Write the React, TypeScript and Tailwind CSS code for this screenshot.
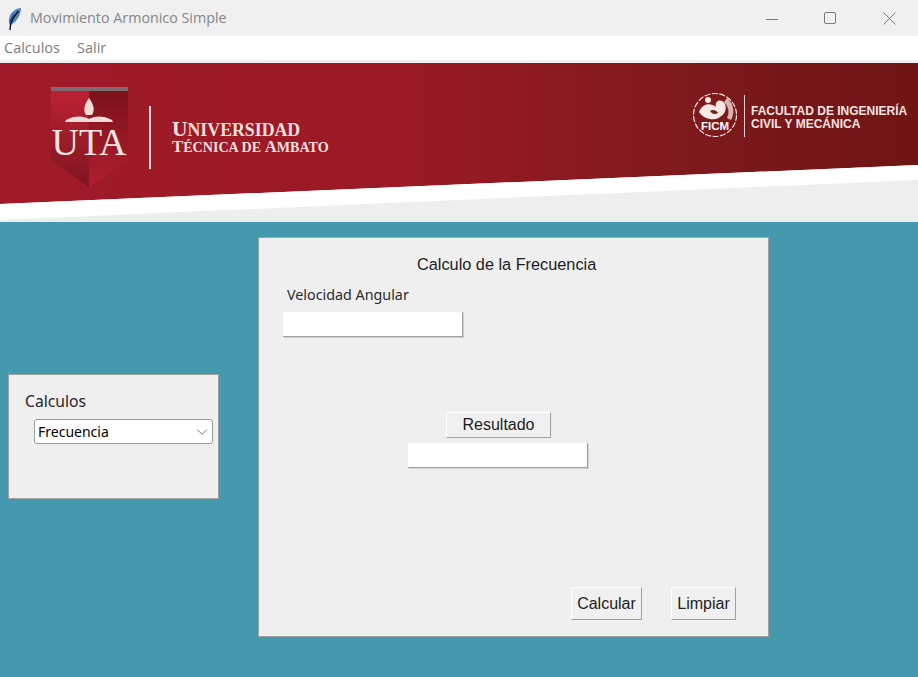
import { ChevronDown } from 'lucide-react';

const raised = "bg-[#f0f0f0] border border-t-white border-l-white border-r-[#a0a0a0] border-b-[#a0a0a0] text-[#1c1c24] font-['Liberation_Sans',sans-serif] text-[16px] leading-none";
const entry = "block h-[25px] w-[180px] bg-white border-r border-b border-r-[#a0a0a0] border-b-[#a0a0a0] shadow-[1px_1px_0_#d0d0d0]";

function TitleBar() {
  return (
    <div className="flex h-9 items-center bg-[#f0f0f0]">
      <svg width="16" height="24" viewBox="0 0 16 24" className="ml-[6px]">
        <path d="M15 2 C10 2 5 6 3.500 11 C2.500 14 2.500 17 4 19 C8 18 12 13 13.500 9 C14.500 6.500 15 4 15 2Z" fill="#4f83c4" />
        <path d="M9 7 C6 10 4 13 3.500 17 C6 15 8 12 9 7Z" fill="#274a80" />
        <path d="M12.500 5 C9 9 6 13 4.500 19 L4 24" stroke="#10141f" strokeWidth="1.400" fill="none" />
      </svg>
      <span className="ml-2 font-['Open_Sans',sans-serif] text-[14.300px] text-[#85868a]">Movimiento Armonico Simple</span>
      <svg width="130" height="14" viewBox="0 0 130 14" className="ml-auto mr-[22px]" fill="none" stroke="#7a7a7a" strokeWidth="1">
        <path d="M0 8.500 H12" />
        <rect x="58.500" y="1.500" width="11" height="11" rx="1.500" />
        <path d="M117.500 1.500 L129.500 13.500 M129.500 1.500 L117.500 13.500" />
      </svg>
    </div>
  );
}

function MenuBar() {
  return (
    <div className="flex h-6 items-center gap-[17px] bg-white pb-[1px] pl-1 font-['Open_Sans',sans-serif] text-[14.500px] text-[#7d7d80]">
      <span>Calculos</span>
      <span>Salir</span>
    </div>
  );
}

function Banner() {
  return (
    <svg width="918" height="162" viewBox="0 0 918 162" className="block">
      <defs>
        <linearGradient id="red" x1="0" y1="0" x2="1" y2="0">
          <stop offset="0" stopColor="#a11a29" />
          <stop offset="0.45" stopColor="#9a1a25" />
          <stop offset="0.75" stopColor="#7e191c" />
          <stop offset="1" stopColor="#6f1414" />
        </linearGradient>
        <linearGradient id="shieldL" x1="0" y1="0" x2="0" y2="1">
          <stop offset="0" stopColor="#bb2233" />
          <stop offset="1" stopColor="#7f1520" />
        </linearGradient>
        <linearGradient id="shieldR" x1="0" y1="0" x2="0" y2="1">
          <stop offset="0" stopColor="#7b1219" />
          <stop offset="1" stopColor="#b01f30" />
        </linearGradient>
      </defs>
      <rect width="918" height="162" fill="#eeeeee" />
      <rect width="918" height="3" fill="#f0f0f0" />
      <path d="M0 3 H918 V105 L0 144 Z" fill="url(#red)" />
      <path d="M0 144 L918 105 V120 L0 160 Z" fill="#ffffff" />

      {/* UTA shield */}
      <path d="M51 31 H89 V127 L51 100 Z" fill="url(#shieldL)" />
      <path d="M89 31 H128 V100 L89 127 Z" fill="url(#shieldR)" />
      <rect x="51" y="27" width="77" height="4" fill="#7d6a72" />
      <path d="M89 38 C84 45 83 50 86 55 H92 C95 50 94 45 89 38Z" fill="#f3dcd8" />
      <path d="M66 60 C75 55 84 56 89 59 C94 56 103 55 112 60 L113 62 H65Z" fill="#f3dcd8" />
      <text x="89" y="95" textAnchor="middle" fontFamily="Liberation Serif" fontSize="38" fill="#f6e6e2">UTA</text>
      <rect x="149" y="46" width="2" height="63" fill="#efd6d4" />
      <text x="172" y="76" fontFamily="Liberation Serif" fontSize="17.800" fontWeight="700" fill="#f4dfdc"><tspan fontSize="21.500">U</tspan>NIVERSIDAD</text>
      <text x="172" y="92" fontFamily="Liberation Serif" fontSize="14.100" fontWeight="700" fill="#f4dfdc"><tspan fontSize="16.800">T</tspan>ÉCNICA DE <tspan fontSize="16.800">A</tspan>MBATO</text>

      {/* FICM seal */}
      <circle cx="715" cy="55" r="21.500" fill="none" stroke="#f3e3e0" strokeWidth="1.200" strokeDasharray="6 1.500" />
      <path d="M699 52 C702 44 710 42 716 47 C714 40 722 38 725 44 C727 49 725 54 720 57 C715 61 704 60 699 52Z" fill="#f5e8e5" />
      <circle cx="708" cy="40" r="3" fill="#f5e8e5" />
      <path d="M710 51 C713 49 716 50 718 53 C715 55 712 54 710 51Z" fill="#7c1a1c" />
      <path d="M727 38 A17 17 0 0 1 731 60 L727 58 A13 13 0 0 0 724 42Z" fill="#d8b4b0" />
      <text x="715" y="70" textAnchor="middle" fontFamily="Liberation Sans" fontSize="11.500" fontWeight="700" fill="#ffffff">FICM</text>
      <rect x="744" y="35" width="1" height="42" fill="#e8cfcc" />
      <text x="751" y="55" fontFamily="Liberation Sans" fontSize="12" fontWeight="700" fill="#f3e3e0">FACULTAD DE INGENIERÍA</text>
      <text x="751" y="67.500" fontFamily="Liberation Sans" fontSize="12" fontWeight="700" fill="#f3e3e0">CIVIL Y MECÁNICA</text>
    </svg>
  );
}

function SidePanel() {
  return (
    <div className="mt-[152px] h-[125px] w-[211px] border border-[#a0a0a0] bg-[#efefef] pl-4 pt-[16px]">
      <div className="font-['Noto_Sans',sans-serif] text-[15.700px] leading-[20px] text-[#26262e]">Calculos</div>
      <div className="ml-[9px] mt-[8px] flex h-[25px] w-[179px] items-center justify-between rounded-[3px] border border-[#9c9c9c] bg-white pl-[3px] pr-[1px] font-['Noto_Sans',sans-serif] text-[14px] text-black">
        <span>Frecuencia</span>
        <ChevronDown size={18} strokeWidth={1.200} className="text-[#666]" />
      </div>
    </div>
  );
}

function MainPanel() {
  return (
    <div className="ml-[39px] mt-[15px] flex h-[400px] w-[511px] flex-col border border-[#a0a0a0] bg-[#efefef] font-['Liberation_Sans',sans-serif]">
      <div className="ml-[158px] mt-[17px] text-[16.300px] leading-[18px] text-[#1c1c24]">Calculo de la Frecuencia</div>
      <div className="ml-[28px] mt-[13px] font-['Noto_Sans',sans-serif] text-[14.300px] leading-[18px] text-[#2a2a30]">Velocidad Angular</div>
      <input className={`${entry} ml-[24px] mt-[8px]`} readOnly />
      <button className={`${raised} ml-[187px] mt-[75px] h-[26px] w-[105px]`}>Resultado</button>
      <input className={`${entry} ml-[149px] mt-[5px]`} readOnly />
      <div className="mt-[119px] flex gap-[29px] pl-[312px]">
        <button className={`${raised} h-[33px] w-[71px] pt-[1px]`}>Calcular</button>
        <button className={`${raised} h-[33px] w-[65px] pt-[1px]`}>Limpiar</button>
      </div>
    </div>
  );
}

export default function App() {
  return (
    <div className="h-[677px] w-[918px] overflow-hidden bg-[#4499ae]">
      <TitleBar />
      <MenuBar />
      <Banner />
      <main className="flex items-start pl-2">
        <SidePanel />
        <MainPanel />
      </main>
    </div>
  );
}
